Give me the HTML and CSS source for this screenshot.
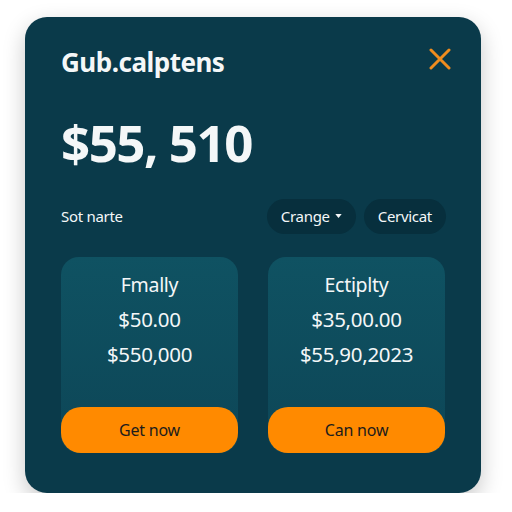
FILE: index.html
```html
<!DOCTYPE html>
<html>
  <head>
    <meta charset="UTF-8" />
    <meta name="viewport" content="width=device-width, initial-scale=1" />
    <title>Gub.calptens</title>
    <link rel="stylesheet" href="styles.css">
  </head>
  <body>
    <div class="panel">
      <div class="panel-head">
        <h1 class="panel-title">Gub.calptens</h1>
        <button class="close" aria-label="Close">
          <svg width="22" height="22" viewBox="0 0 22 22">
            <path d="M2 2 L20 20 M20 2 L2 20" stroke="#f08c1e" stroke-width="3" stroke-linecap="round" fill="none" />
          </svg>
        </button>
      </div>

      <div class="amount">$55, 510</div>

      <div class="filters">
        <span class="filters-label">Sot narte</span>
        <div class="pills">
          <button class="pill">Crange
            <svg width="7" height="4" viewBox="0 0 8 5"><path d="M0 0 H8 L4 5 Z" fill="#f4f7f8" /></svg>
          </button>
          <button class="pill">Cervicat</button>
        </div>
      </div>

      <div class="plans">
        <div class="plan">
          <div class="plan-name">Fmally</div>
          <div class="plan-line">$50.00</div>
          <div class="plan-line">$550,000</div>
          <button class="plan-btn">Get now</button>
        </div>
        <div class="plan">
          <div class="plan-name">Ectiplty</div>
          <div class="plan-line">$35,00.00</div>
          <div class="plan-line">$55,90,2023</div>
          <button class="plan-btn">Can now</button>
        </div>
      </div>
    </div>
  </body>
</html>
```

FILE: styles.css
```css
/* base */
html, body {
  margin: 0;
  padding: 0;
  background: #ffffff;
  font-family: "Noto Sans", "Open Sans", sans-serif;
  color: #f4f7f8;
}

button {
  font-family: inherit;
  border: none;
  cursor: pointer;
}

/* main panel */
.panel {
  width: 456px;
  height: 476px;
  margin: 17px 0 0 25px;
  padding: 29px 36px 40px;
  box-sizing: border-box;
  background: #0a3a4a;
  border-radius: 22px;
  box-shadow: 0 8px 22px rgba(0, 0, 0, 0.22);
}

.panel-head {
  display: flex;
  justify-content: space-between;
  align-items: center;
  height: 32px;
}

.panel-title {
  margin: 0;
  font-size: 26px;
  line-height: 32px;
  font-weight: 700;
  letter-spacing: -0.5px;
}

.close {
  background: none;
  padding: 0;
  width: 22px;
  height: 22px;
  margin: 0 -6px 6px 0;
}

.close svg {
  display: block;
}

.amount {
  margin-top: 34px;
  font-size: 51px;
  line-height: 60px;
  font-weight: 700;
  letter-spacing: -1.5px;
}

/* filter row */
.filters {
  display: flex;
  justify-content: space-between;
  align-items: center;
  margin-top: 26px;
  height: 36px;
}

.filters-label {
  font-size: 15px;
  letter-spacing: -0.3px;
}

.pills {
  display: flex;
  gap: 8px;
  margin-right: -1px;
}

.pill {
  display: flex;
  align-items: center;
  gap: 5px;
  height: 35px;
  padding: 0 14px;
  border-radius: 18px;
  background: #072f3d;
  color: #f4f7f8;
  font-size: 15px;
  letter-spacing: -0.3px;
}

/* plan cards */
.plans {
  display: grid;
  grid-template-columns: 1fr 1fr;
  gap: 30px;
  margin-top: 23px;
}

.plan {
  display: flex;
  flex-direction: column;
  align-items: center;
  height: 196px;
  padding-top: 10px;
  box-sizing: border-box;
  border-radius: 18px;
  background: linear-gradient(180deg, #0f5262 0%, #0d4657 100%);
}

.plan-name {
  font-size: 19.5px;
  line-height: 35px;
  letter-spacing: -0.3px;
}

.plan-line {
  font-size: 20.5px;
  line-height: 35px;
  letter-spacing: -0.3px;
}

.plan-btn {
  margin-top: auto;
  width: 100%;
  height: 46px;
  border-radius: 20px;
  background: #ff8a00;
  color: #1c1c1c;
  font-size: 16px;
  letter-spacing: -0.2px;
}
```
